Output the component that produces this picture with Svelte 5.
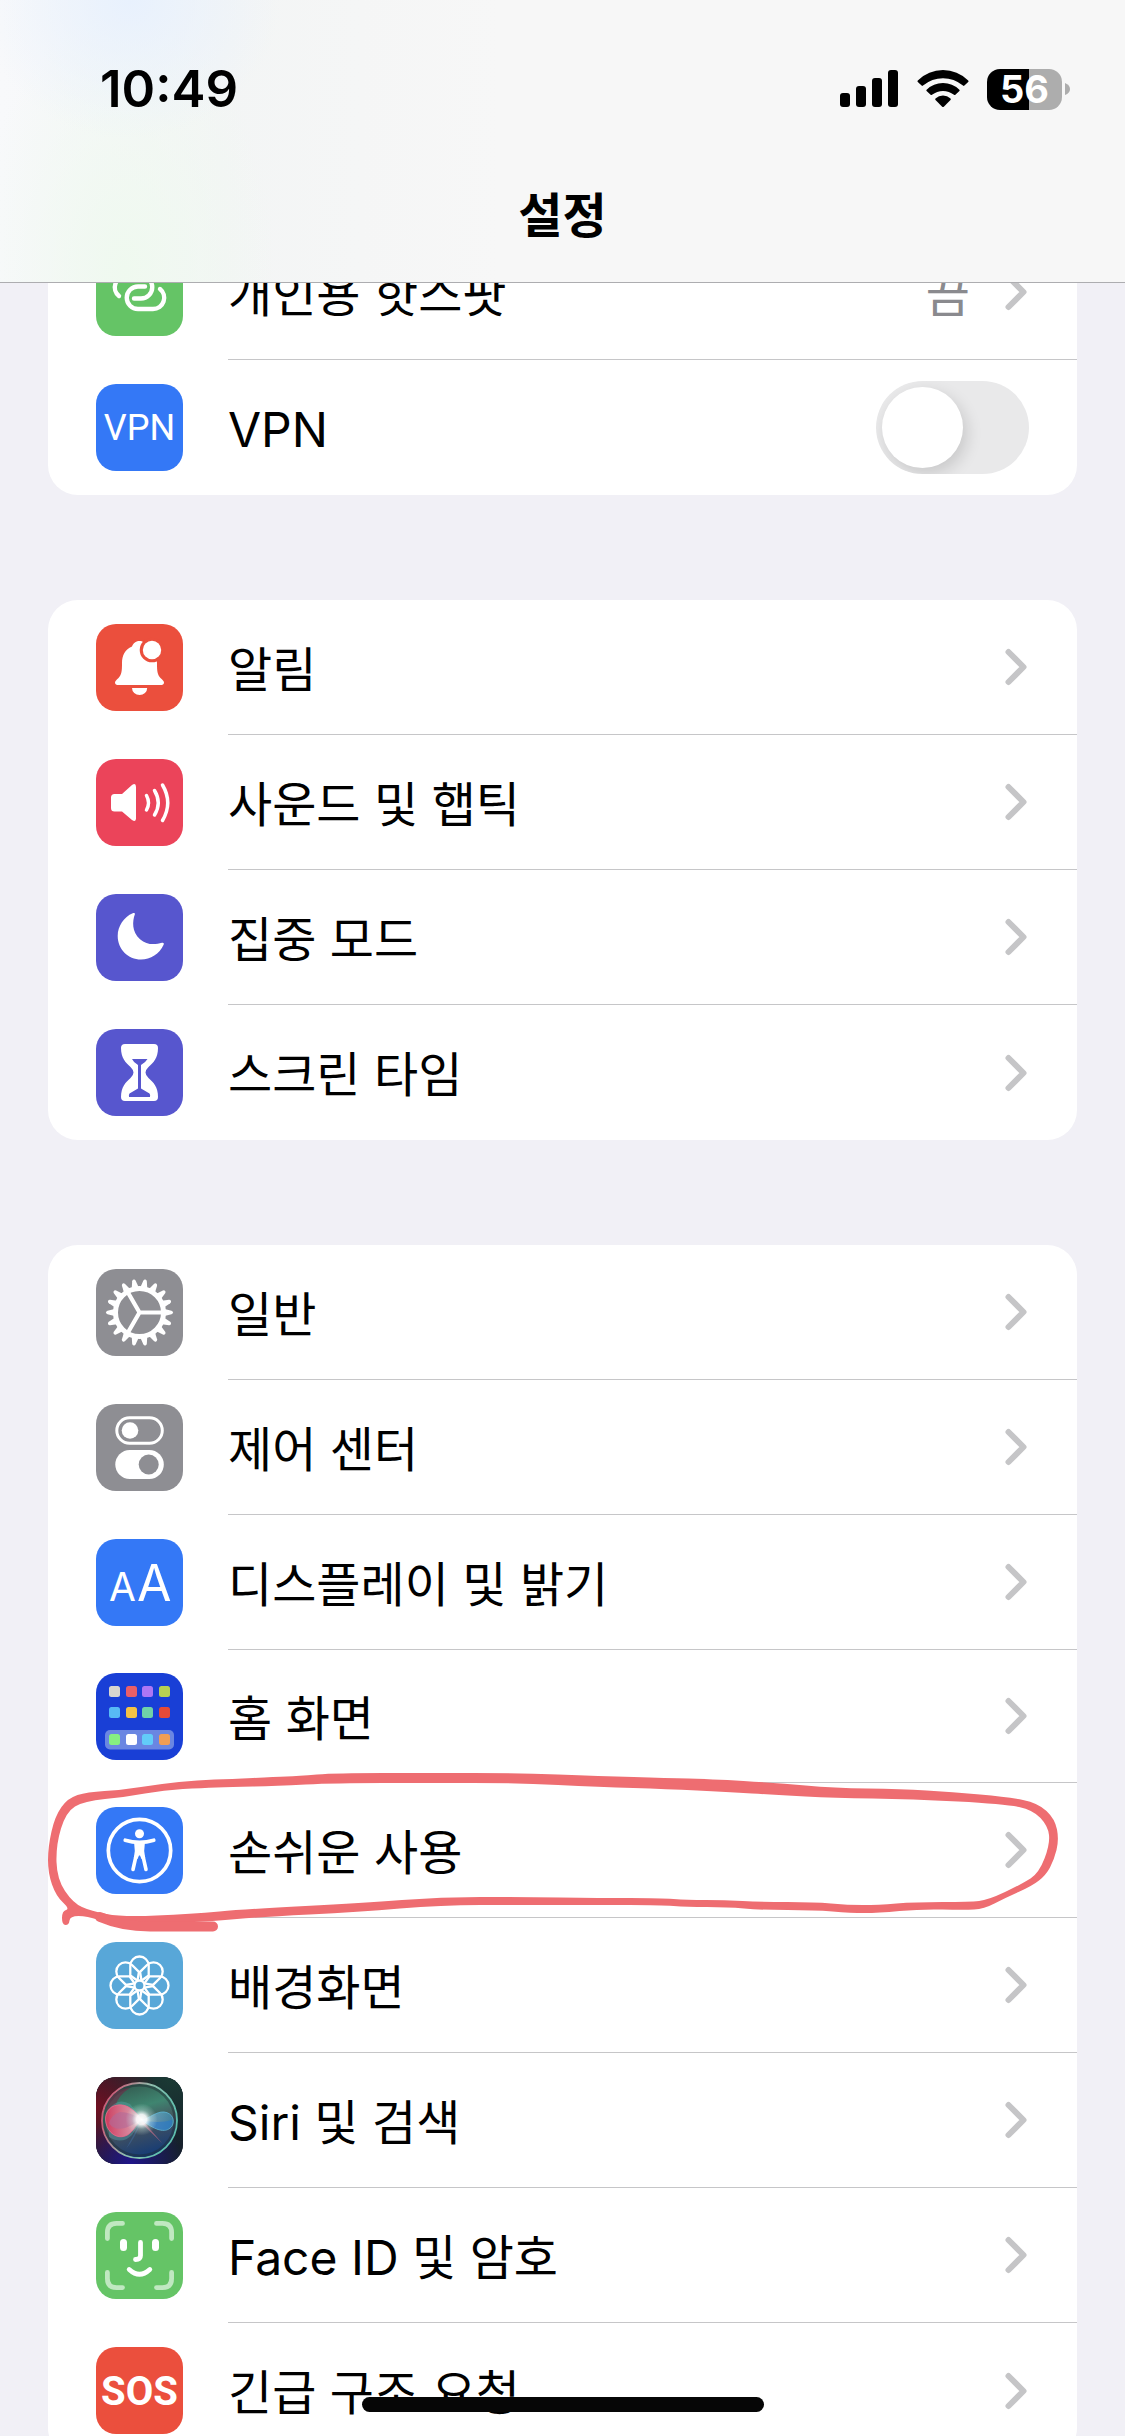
<script>
  const groups = [
    [
      { id: 'hotspot', label: '개인용 핫스팟', color: '#65c466', value: '끔' },
      { id: 'vpn', label: 'VPN', color: '#3478f6', toggle: true }
    ],
    [
      { id: 'bell', label: '알림', color: '#eb4f3d' },
      { id: 'sound', label: '사운드 및 햅틱', color: '#eb445a' },
      { id: 'moon', label: '집중 모드', color: '#5756ce' },
      { id: 'hourglass', label: '스크린 타임', color: '#5756ce' }
    ],
    [
      { id: 'gear', label: '일반', color: '#8e8e93' },
      { id: 'control', label: '제어 센터', color: '#8e8e93' },
      { id: 'display', label: '디스플레이 및 밝기', color: '#3478f6' },
      { id: 'home', label: '홈 화면', color: '#193fd6' },
      { id: 'access', label: '손쉬운 사용', color: '#3478f6', marked: true },
      { id: 'flower', label: '배경화면', color: '#58a7d8' },
      { id: 'siri', label: 'Siri 및 검색', color: '#1a2030' },
      { id: 'face', label: 'Face ID 및 암호', color: '#65c466' },
      { id: 'sos', label: '긴급 구조 요청', color: '#eb4f3d' }
    ]
  ];

  const homeColors = [
    ['#d8d6cf', '#ea5f68', '#ad76f5', '#b7d153'],
    ['#57baf5', '#f5c244', '#6fd3a8', '#e64a37'],
    ['#86ef81', '#ffffff', '#62ccf9', '#f19e54']
  ];
  const homeCols = [13, 30, 46, 63];
  const homeRows = [13, 34, 61];

  const teeth = Array.from({ length: 18 }, (_, i) => i * 20);
  const petals = Array.from({ length: 8 }, (_, i) => i * 45);

  // Closed smooth curve: quadratic arcs that join at the midpoints between points.
  function smooth(pts) {
    const mid = (a, b) => `${(a[0] + b[0]) / 2} ${(a[1] + b[1]) / 2}`;
    const n = pts.length;
    let d = `M${mid(pts[n - 1], pts[0])}`;
    for (let i = 0; i < n; i++) {
      d += `Q${pts[i][0]} ${pts[i][1]} ${mid(pts[i], pts[(i + 1) % n])}`;
    }
    return d + 'Z';
  }

  const outer = [
    [231, 1779], [275, 1777], [298, 1776], [336, 1773], [430, 1773], [516, 1773], [600, 1776], [667, 1778], [710, 1779],
    [777, 1783], [834, 1788], [901, 1789], [952, 1792], [1008, 1797], [1038, 1803], [1055, 1819], [1059, 1840],
    [1054, 1860], [1046, 1875], [1032, 1886], [1005, 1898], [984, 1909], [964, 1910], [921, 1909], [878, 1913],
    [851, 1913], [814, 1910], [761, 1910], [727, 1907], [687, 1907], [660, 1905], [600, 1905], [520, 1905], [441, 1905],
    [359, 1912], [260, 1917], [214, 1921], [156, 1924], [110, 1924], [87, 1916], [70, 1916], [69, 1925], [62, 1925],
    [62, 1911], [70, 1909], [56, 1896], [48, 1873], [48, 1847], [55, 1816], [68, 1798], [87, 1792], [122, 1790],
    [160, 1784], [198, 1780]
  ];
  const inner = [
    [231, 1787], [275, 1786], [336, 1783], [430, 1783], [516, 1783], [600, 1787], [667, 1789], [727, 1792], [777, 1795],
    [834, 1798], [911, 1799], [1005, 1804], [1033, 1810], [1048, 1826], [1050, 1844], [1039, 1873], [1022, 1884],
    [988, 1900], [970, 1902], [915, 1902], [878, 1905], [848, 1905], [814, 1902], [761, 1902], [724, 1900],
    [687, 1900], [660, 1898], [600, 1898], [520, 1897], [441, 1897], [363, 1903], [248, 1909], [191, 1914], [122, 1917],
    [91, 1911], [73, 1903], [57, 1879], [56, 1845], [66, 1812], [84, 1801], [126, 1797], [164, 1790], [202, 1788]
  ];
  const markPath = smooth(outer) + smooth(inner);
</script>

{#snippet glyph(id)}
  {#if id === 'hotspot'}
    <g fill="none" stroke="#fff" stroke-width="4.4" stroke-linecap="round">
      <path d="M49 37.5H42A11.25 11.25 0 0 0 42 60H57A11.25 11.25 0 0 0 64 40" />
      <path d="M38 49.5H45A11.25 11.25 0 0 0 45 27H30A11.25 11.25 0 0 0 23 47" />
    </g>
  {:else if id === 'vpn'}
    <text class="vpn" x="43.5" y="56" text-anchor="middle">VPN</text>
  {:else if id === 'bell'}
    <path fill="#fff" d="M43.5 17c-4 0-6.5 2.500-7.500 5.500c-7 3-10 9-10 16.500c0 9-.5 11.500-3.500 15c-2 2-3.500 3-3.500 4.500c0 1.500 1 2.500 2.500 2.500h44c1.500 0 2.500-1 2.500-2.500c0-1.500-1.500-2.500-3.500-4.500c-3-3.500-3.500-6-3.500-15c0-7.500-3-13.500-10-16.500c-1-3-3.500-5.500-7.500-5.500ZM36 64h15.200a7.600 7 0 0 1-15.200 0Z" />
    <circle cx="56" cy="26" r="12.300" fill="#eb4f3d" />
    <circle cx="56" cy="26" r="9.200" fill="#fff" />
  {:else if id === 'sound'}
    <path fill="#fff" d="M15 38.500Q15 35 18.500 35H26L36 26Q40 23.500 40 28V59.500Q40 63.500 36 61L26 52.500H18.500Q15 52.500 15 49Z" />
    <g fill="none" stroke="#fff" stroke-width="3.500" stroke-linecap="round">
      <path d="M50.500 36.500Q54.500 43.800 50.500 51" />
      <path d="M58.500 31.500Q66 43.800 58.500 56" />
      <path d="M66.500 26Q77 43.800 66.500 61.500" />
    </g>
  {:else if id === 'moon'}
    <path fill="#fff" d="M38.800 20.500C36.500 27 35.500 37.500 44 45.200C51 51.500 59.500 50.500 66 48.800C67.600 48.400 68.200 49.300 67.600 50.800C63.500 60 54.500 65.500 45 65.500C32 65.500 21.700 55 21.700 42C21.700 32 28 22.800 36.700 19.200C38.300 18.500 39.300 19.200 38.800 20.500Z" />
  {:else if id === 'hourglass'}
    <path fill="#fff" d="M29 15H58Q62 15 62 19C62 29 57.500 33.500 52.500 38Q49.500 41 49.500 43.500Q49.500 46 52.500 49C57.500 53.500 62 58 62 68Q62 72 58 72H29Q25 72 25 68C25 58 29.500 53.500 34.500 49Q37.500 46 37.500 43.500Q37.500 41 34.500 38C29.500 33.500 25 29 25 19Q25 15 29 15Z" />
    <path fill="#5756ce" d="M36 30H51.500Q49.500 33.500 45 36V59.500L53.500 64.500Q54.500 65.500 54 68H33Q32.500 65.500 33.500 64.500L42 59.500V36Q37.500 33.500 36 30Z" />
  {:else if id === 'gear'}
    <circle cx="43.500" cy="43.500" r="24" fill="none" stroke="#fff" stroke-width="5" />
    <g fill="#fff">
      {#each teeth as a}
        <path transform="rotate({a} 43.500 43.500)" d="M68.500 40L75.500 41.700Q77 42.200 77 43.500Q77 44.800 75.500 45.300L68.500 47Z" />
      {/each}
    </g>
    <path fill="none" stroke="#fff" stroke-width="4.200" d="M67 43.500H43.500L31.800 23.200M43.500 43.500L31.800 63.800" />
  {:else if id === 'control'}
    <rect x="20.800" y="13.700" width="45.500" height="25.600" rx="12.800" fill="none" stroke="#fff" stroke-width="3" />
    <circle cx="34" cy="26.500" r="8.300" fill="#fff" />
    <rect x="19.300" y="46" width="48.500" height="29" rx="14.500" fill="#fff" />
    <circle cx="52.700" cy="60.500" r="10" fill="#8e8e93" />
  {:else if id === 'display'}
    <text class="aa" x="13" y="62" font-size="39">A</text>
    <text class="aa" x="41" y="62" font-size="50">A</text>
  {:else if id === 'home'}
    <rect x="9" y="57" width="69" height="19.500" rx="5" fill="#6a86e2" />
    {#each homeColors as line, r}
      {#each line as c, k}
        <rect x={homeCols[k]} y={homeRows[r]} width="11" height="11" rx="2.500" fill={c} />
      {/each}
    {/each}
  {:else if id === 'access'}
    <circle cx="43.500" cy="43.500" r="31.200" fill="none" stroke="#fff" stroke-width="3.700" />
    <circle cx="43.500" cy="26.700" r="4.500" fill="#fff" />
    <path fill="none" stroke="#fff" stroke-width="3.600" stroke-linecap="round" d="M29.200 33.200Q43.500 37.500 57.800 33.200M39.800 50L37 62.500M47.200 50L50 62.500" />
    <path fill="#fff" d="M38 34.500H49L48.200 44L49.200 51L45.500 52L44 48.500H43L41.500 52L37.800 51L38.800 44Z" />
  {:else if id === 'flower'}
    <g fill="none" stroke="#fff" stroke-width="2.300" stroke-linejoin="round">
      {#each petals as a}
        <path transform="rotate({a} 43.500 43.500)" d="M41.700 38.800L34.300 33.500V23.700A9.200 9.200 0 0 1 52.700 23.700V33.500L45.300 38.800" />
      {/each}
      <circle cx="43.500" cy="43.500" r="5" />
    </g>
  {:else if id === 'siri'}
    <defs>
      <radialGradient id="s-red" cx="0" cy=".35" r=".75"><stop offset="0" stop-color="#701022" /><stop offset="1" stop-color="#701022" stop-opacity="0" /></radialGradient>
      <radialGradient id="s-green" cx=".85" cy="0" r=".8"><stop offset="0" stop-color="#1b3a34" /><stop offset="1" stop-color="#1b3a34" stop-opacity="0" /></radialGradient>
      <radialGradient id="s-blue" cx=".4" cy="1" r=".6"><stop offset="0" stop-color="#20158a" /><stop offset="1" stop-color="#20158a" stop-opacity="0" /></radialGradient>
      <linearGradient id="s-orb" x1=".3" y1="0" x2=".6" y2="1"><stop offset="0" stop-color="#32584e" /><stop offset=".35" stop-color="#3f8570" /><stop offset=".6" stop-color="#44525e" /><stop offset="1" stop-color="#123a78" /></linearGradient>
      <linearGradient id="s-rim" x1=".1" y1=".3" x2=".9" y2=".6"><stop offset="0" stop-color="#c8607a" /><stop offset=".5" stop-color="#8fbfae" /><stop offset="1" stop-color="#5fbfae" /></linearGradient>
      <linearGradient id="s-pink" x1="0" y1="0" x2="1" y2="0"><stop offset="0" stop-color="#e0345c" /><stop offset="1" stop-color="#f0b0c0" /></linearGradient>
      <linearGradient id="s-cyan" x1="0" y1="0" x2="1" y2="0"><stop offset="0" stop-color="#9fd0f5" /><stop offset="1" stop-color="#3c9fc8" /></linearGradient>
      <radialGradient id="s-glow"><stop offset="0" stop-color="#fff" /><stop offset=".32" stop-color="#fff" stop-opacity=".9" /><stop offset=".6" stop-color="#d6f5ee" stop-opacity=".35" /><stop offset="1" stop-color="#d6f5ee" stop-opacity="0" /></radialGradient>
    </defs>
    <rect width="87" height="87" fill="#16202c" />
    <rect width="87" height="87" fill="url(#s-green)" />
    <rect width="87" height="87" fill="url(#s-red)" />
    <rect width="87" height="87" fill="url(#s-blue)" />
    <circle cx="43.500" cy="43.500" r="37.500" fill="url(#s-orb)" stroke="url(#s-rim)" stroke-width="1.800" />
    <circle cx="43.500" cy="43.500" r="35.300" fill="none" stroke="#1c2a30" stroke-opacity=".45" stroke-width="2.400" />
    <path fill="#6b2c46" fill-opacity=".65" d="M10 34Q14 12 34 11Q22 18 19 30Z" />
    <path fill="#5aa8b0" fill-opacity=".4" d="M13 32Q22 20 34 27L46 42L36 58Q26 68 13 60Z" />
    <path fill="url(#s-pink)" fill-opacity=".88" stroke="#f0688c" stroke-width=".8" d="M45 42C38 32 30 27 22 28C12 29 8 38 10 46C12 56 21 62 29 59C36 57 40 48 45 42Z" />
    <path fill="#b06a9a" fill-opacity=".6" d="M45 42Q34 35 24 35Q16 37 13 46Q18 54 29 51Q38 48 45 42Z" />
    <path fill="url(#s-cyan)" fill-opacity=".6" stroke="#5cb8d8" stroke-width=".8" d="M46 43C54 41 60 34.500 68 35C77 36 79 44 76 49C71 56 61 55 46 43Z" />
    <path fill="#2a78c8" fill-opacity=".6" d="M46 43Q62 47 76 43Q77 50 70 53Q58 53 46 43Z" />
    <path fill="#d0708a" fill-opacity=".6" d="M47 44L67 67Q62 62 45 46Z" />
    <path fill="#4b86c8" fill-opacity=".3" d="M45 44L30 72Q40 60 45 44Z" />
    <circle cx="45.500" cy="42.500" r="16" fill="url(#s-glow)" />
  {:else if id === 'face'}
    <g fill="none" stroke-linecap="round">
      <path stroke="#c0e8c1" stroke-width="4.800" d="M11.400 26.500V20.500Q11.400 11.400 20.500 11.400H26.500M60.500 11.400H66.500Q75.600 11.400 75.600 20.500V26.500M75.600 60.500V66.500Q75.600 75.600 66.500 75.600H60.500M26.500 75.600H20.500Q11.400 75.600 11.400 66.500V60.500" />
      <path stroke="#fff" stroke-width="7" d="M27.500 30.500V35.500M59.500 30.500V35.500" />
      <path stroke="#fff" stroke-width="4.800" d="M44.500 30.500V43.500Q44.500 47.500 39.500 47.500M33.200 57.500Q43.500 67 53.800 57.500" />
    </g>
  {:else if id === 'sos'}
    <text class="sos" x="43.500" y="58" text-anchor="middle">SOS</text>
  {/if}
{/snippet}

{#snippet icon(item)}
  <svg class="icon" viewBox="0 0 87 87" aria-hidden="true">
    <clipPath id="clip-{item.id}"><rect width="87" height="87" rx="20" /></clipPath>
    <g clip-path="url(#clip-{item.id})">
      <rect width="87" height="87" fill={item.color} />
      {@render glyph(item.id)}
    </g>
  </svg>
{/snippet}

<div class="screen">
  <header>
    <div class="status">
      <time>10:49</time>
      <div class="indicators">
        <svg width="58" height="38" viewBox="0 0 58 38" aria-label="신호">
          <rect x="0" y="23" width="10" height="14" rx="3" />
          <rect x="16" y="16" width="10" height="21" rx="3" />
          <rect x="32" y="8" width="10" height="29" rx="3" />
          <rect x="48" y="0" width="10" height="37" rx="3" />
        </svg>
        <svg class="wifi" width="52" height="38" viewBox="0 0 52 38" aria-label="Wi-Fi">
          <path d="M.8 10.500Q0 11.200.8 12L4.600 15.600Q5.300 16.200 6 15.600Q15 8.300 26 8.300Q37 8.300 46 15.600Q46.700 16.200 47.400 15.600L51.200 12Q52 11.200 51.200 10.500Q40.500 0 26 0Q11.500 0 .8 10.500Z" />
          <path d="M9.600 19.700Q9 20.400 9.600 21L13.600 24.800Q14.300 25.400 15 24.800Q20 21 26 21Q32 21 37 24.800Q37.700 25.400 38.400 24.800L42.400 21Q43 20.400 42.400 19.700Q35.500 13 26 13Q16.500 13 9.600 19.700Z" />
          <path d="M18.500 28.600Q17.800 29.300 18.500 30L25.200 36.700Q26 37.400 26.800 36.700L33.500 30Q34.200 29.300 33.500 28.600Q30.300 25.500 26 25.500Q21.700 25.500 18.500 28.600Z" />
        </svg>
        <div class="battery"><span>56</span></div>
        <svg class="nub" width="5" height="12" viewBox="0 0 5 12"><path d="M0 0Q5 2 5 6Q5 10 0 12Z" fill="#adadad" /></svg>
      </div>
    </div>
    <h1>설정</h1>
  </header>

  <main>
    {#each groups as group}
      <ul>
        {#each group as item}
          <li class:compact={item.id === 'home'}>
            {#if item.toggle}
              <label class="row">
                {@render icon(item)}
                <span class="content">
                  <span class="text">{item.label}</span>
                  <input type="checkbox" role="switch" />
                </span>
              </label>
            {:else}
              <a class="row" href="#{item.id}">
                {@render icon(item)}
                <span class="content">
                  <span class="text">{item.label}</span>
                  {#if item.value}<span class="value">{item.value}</span>{/if}
                  <svg class="chevron" viewBox="0 0 22 38" aria-hidden="true"><path d="M3.500 4L18.500 19L3.500 34" /></svg>
                </span>
              </a>
            {/if}
            {#if item.marked}
              <svg class="mark" viewBox="48 1783 1029 135" preserveAspectRatio="none" aria-hidden="true">
                <path class="loop" d={markPath} />
                <path class="tail" d="M100 1917Q122 1926.500 150 1926.500H213" />
              </svg>
            {/if}
          </li>
        {/each}
      </ul>
    {/each}
  </main>
  <div class="home-indicator"></div>
</div>

<style>
  :global(body) {
    background: #f1f0f6;
  }

  .screen {
    position: relative;
    height: 100vh;
    overflow: hidden;
    background: #f1f0f6;
    color: #000;
    font-family: Inter, 'Noto Sans CJK KR', sans-serif;
    font-size: 48px;
    line-height: 60px;
  }

  header {
    position: absolute;
    z-index: 2;
    top: 0;
    left: 0;
    right: 0;
    height: 283px;
    box-sizing: border-box;
    border-bottom: 1px solid #adadb0;
    background:
      radial-gradient(ellipse 150px 140px at 130px 0, #e8f1fd, #e8f1fd00),
      radial-gradient(ellipse 150px 260px at 125px 270px, #eff9ef, #eff9ef00),
      linear-gradient(90deg, #f8f9fb, #f3f5f5 220px, #f7f7f7 500px, #f7f7f7);
  }

  .status {
    display: flex;
    justify-content: space-between;
    align-items: center;
    padding: 59px 55px 0 100px;
  }

  time {
    font-size: 51px;
    font-weight: 600;
  }

  .indicators {
    display: flex;
    align-items: center;
  }

  .wifi {
    margin: 0 18px 0 19px;
  }

  .battery {
    display: grid;
    place-items: center;
    width: 75px;
    height: 41px;
    border-radius: 13px;
    background: linear-gradient(90deg, #000 42px, #adadad 42px);
    color: #fff;
    font-size: 38px;
    font-weight: 700;
    line-height: 41px;
  }

  .nub {
    margin-left: 3px;
  }

  h1 {
    margin: 67px 0 0;
    text-align: center;
    font-size: 48px;
    font-weight: 700;
    line-height: 60px;
  }

  main {
    display: flex;
    flex-direction: column;
    gap: 105px;
    padding: 225px 48px 0;
  }

  ul {
    margin: 0;
    padding: 0;
    list-style: none;
    border-radius: 30px;
    background: #fff;
  }

  li {
    position: relative;
    height: 135px;
  }

  .compact {
    height: 133px;
  }

  .row {
    display: flex;
    align-items: center;
    gap: 45px;
    height: 100%;
    padding-left: 48px;
    color: inherit;
    text-decoration: none;
  }

  .icon {
    flex: none;
    width: 87px;
    height: 87px;
  }

  .content {
    display: flex;
    flex: 1;
    align-items: center;
    box-sizing: border-box;
    height: 100%;
    padding-right: 48px;
    border-bottom: 1px solid #c6c6c8;
  }

  li:last-child .content {
    border-bottom: 0;
  }

  .text {
    flex: 1;
    padding-top: 5px;
  }

  .value {
    padding: 5px 35px 0 0;
    color: #8a8a8e;
  }

  .chevron {
    width: 22px;
    height: 38px;
    margin-right: 2px;
    fill: none;
    stroke: #c5c5c7;
    stroke-width: 6;
    stroke-linecap: round;
    stroke-linejoin: round;
  }

  input {
    appearance: none;
    display: flex;
    align-items: center;
    width: 153px;
    height: 93px;
    margin: 0;
    padding: 6px;
    box-sizing: border-box;
    border-radius: 47px;
    background: #e9e9ea;
    overflow: hidden;
  }

  input::before {
    content: '';
    width: 81px;
    height: 81px;
    border-radius: 50%;
    background: #fff;
    box-shadow: 4px 6px 16px #00000024;
  }

  input:checked {
    justify-content: flex-end;
    background: #65c466;
  }

  .vpn {
    fill: #fff;
    font: 400 36px Roboto, sans-serif;
  }

  .aa {
    fill: #fff;
    font-family: Inter, sans-serif;
    font-weight: 400;
  }

  .sos {
    fill: #fff;
    font: 700 40px 'Liberation Sans Narrow', Roboto, sans-serif;
  }

  .mark {
    position: absolute;
    z-index: 1;
    inset: 0;
    width: 100%;
    height: 100%;
    overflow: visible;
    pointer-events: none;
  }

  .loop {
    fill: #ee6d71;
    fill-rule: evenodd;
  }

  .tail {
    fill: none;
    stroke: #ee6d71;
    stroke-width: 10;
    stroke-linecap: round;
  }

  .home-indicator {
    position: absolute;
    z-index: 2;
    bottom: 24px;
    left: 50%;
    width: 402px;
    height: 15px;
    margin-left: -201px;
    border-radius: 8px;
    background: #060606;
  }
</style>
